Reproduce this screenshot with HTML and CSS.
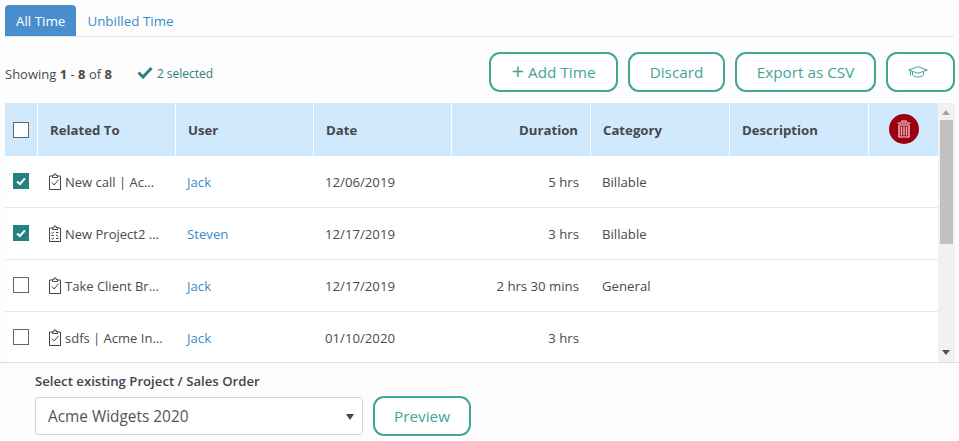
FILE: index.html
```html
<!DOCTYPE html>
<html lang="en">
<head>
  <meta charset="UTF-8" />
  <title>Time Entries</title>
  <link rel="stylesheet" href="styles.css">
</head>
<body>

<div class="tabs">
  <a class="tab active">All Time</a>
  <a class="tab">Unbilled Time</a>
</div>

<div class="toolbar">
  <div class="summary">
    <span>Showing <b>1</b> - <b>8</b> of <b>8</b></span>
    <span class="selected">
      <svg class="tick" viewBox="0 0 16 13"><path d="M1.5 6.5 L6 11 L14.5 2" /></svg>
      2 selected
    </span>
  </div>
  <div class="actions">
    <button class="btn btn-add"><span class="plus">+</span> Add Time</button>
    <button class="btn btn-discard">Discard</button>
    <button class="btn btn-export">Export as CSV</button>
    <button class="btn btn-help">
      <svg viewBox="0 0 20 12" width="20" height="12"><path d="M10 .7 L19.3 4 L10 7.3 L.7 4 Z M4.5 5.8 V9 C7 11.6 13 11.6 15.5 9 V5.8 M2.5 4.8 V9.5" /></svg>
    </button>
  </div>
</div>

<div class="grid-wrap">
  <div class="grid-scroll">
    <table class="grid">
      <thead>
        <tr>
          <th class="col-check"><span class="check"></span></th>
          <th>Related To</th>
          <th>User</th>
          <th>Date</th>
          <th class="num">Duration</th>
          <th>Category</th>
          <th>Description</th>
          <th class="col-del">
            <span class="del">
              <svg viewBox="0 0 14 18" width="14" height="18"><path d="M5 2 V1 H9 V2 M0.5 3 H13.5 M2 5 H12 V17 H2 Z" /><path class="bars" d="M4.5 6.5 V15.5 M7 6.5 V15.5 M9.5 6.5 V15.5" /></svg>
            </span>
          </th>
        </tr>
      </thead>
      <tbody id="rows"></tbody>
    </table>
  </div>
  <div class="scrollbar">
    <span class="arrow up"></span>
    <span class="thumb"></span>
    <span class="arrow down"></span>
  </div>
</div>

<div class="footer">
  <label class="field-label">Select existing Project / Sales Order</label>
  <div class="footer-row">
    <div class="select">Acme Widgets 2020<span class="caret"></span></div>
    <button class="btn btn-preview">Preview</button>
  </div>
</div>

<script>
  const entries = [
    { checked: true, kind: "task", name: "New call | Ac...", user: "Jack", date: "12/06/2019", duration: "5 hrs", category: "Billable" },
    { checked: true, kind: "list", name: "New Project2 ...", user: "Steven", date: "12/17/2019", duration: "3 hrs", category: "Billable" },
    { checked: false, kind: "task", name: "Take Client Br...", user: "Jack", date: "12/17/2019", duration: "2 hrs 30 mins", category: "General" },
    { checked: false, kind: "task", name: "sdfs | Acme In...", user: "Jack", date: "01/10/2020", duration: "3 hrs", category: "" }
  ];

  const board = '<path d="M4 3 H1.5 V16.5 H12.5 V3 H10 M4.5 4.5 V2.5 H6 V1 H8 V2.5 H9.5 V4.5 Z" />';
  const marks = {
    task: '<path d="M4 9.5 L6.2 12 L10.5 6.8" />',
    list: '<path d="M3.5 7.5 L4.5 8.5 L6 6.8 M8 7.5 H10.5 M3.5 10.5 H6 M8 9.8 L10.2 11.5 M3.5 13.5 L4.5 14 L6 13 M8 13.5 H10.5" />'
  };

  document.getElementById("rows").innerHTML = entries.map(e => `
    <tr>
      <td class="col-check"><span class="check ${e.checked ? "on" : ""}">${e.checked ? '<svg viewBox="0 0 16 16"><path d="M3.5 8.5 L6.8 11.5 L12.5 5" /></svg>' : ""}</span></td>
      <td><svg class="kind" viewBox="0 0 14 18" width="14" height="18">${board}${marks[e.kind]}</svg>${e.name}</td>
      <td><a class="user">${e.user}</a></td>
      <td>${e.date}</td>
      <td class="num">${e.duration}</td>
      <td>${e.category}</td>
      <td></td>
      <td></td>
    </tr>`).join("");
</script>
</body>
</html>
```

FILE: styles.css
```css
* {
  box-sizing: border-box;
}

body {
  margin: 0;
  height: 441px;
  overflow: hidden;
  background: #fdfdfd;
  font-family: 'Open Sans', sans-serif;
  font-size: 13px;
  color: #4a4a4a;
}

.tabs {
  display: flex;
  height: 32px;
  margin: 5px 5px 0;
  border-bottom: 1px solid #dfe3ea;
}

.tab {
  padding: 7px 11px 0;
  height: 31px;
  color: #3a8ccb;
  font-size: 13.4px;
  border-radius: 4px 4px 0 0;
}

.tab.active {
  background: #4a8fcd;
  color: #fff;
}

.toolbar {
  display: flex;
  justify-content: space-between;
  align-items: center;
  height: 66px;
  padding: 4px 4px 0 5px;
}

.summary {
  display: flex;
  align-items: center;
  gap: 25px;
  font-size: 13px;
  padding-top: 3px;
}

.selected {
  display: flex;
  align-items: center;
  gap: 4px;
  font-size: 12px;
  color: #2b8080;
}

.tick {
  width: 16px;
  height: 13px;
  margin-top: -3px;
  fill: none;
  stroke: #2b8080;
  stroke-width: 3;
}

.actions {
  display: flex;
  gap: 10px;
}

.btn {
  height: 40px;
  border: 2px solid #41a598;
  border-radius: 11px;
  background: #fff;
  color: #41a598;
  font-family: 'Open Sans', sans-serif;
  font-size: 15.3px;
  padding: 0;
}

.plus {
  font-size: 22px;
  line-height: 16px;
  vertical-align: -1px;
}

.btn-add { width: 129px; }
.btn-discard { width: 97px; }
.btn-export { width: 141px; }
.btn-help { width: 69px; padding: 0 5px 4px 0; }

.btn-help svg {
  fill: none;
  stroke: #41a598;
  stroke-width: 1;
  vertical-align: middle;
}

.grid-wrap {
  display: flex;
  height: 259px;
  margin-left: 5px;
}

.grid-scroll {
  width: 933px;
  overflow: hidden;
  background: #fff;
}

.grid {
  width: 933px;
  table-layout: fixed;
  border-collapse: separate;
  border-spacing: 0;
}

.grid th {
  height: 53px;
  padding: 0 12px;
  background: #d0e9fd;
  border-right: 1px solid #fff;
  text-align: left;
  font-size: 13.2px;
  font-weight: 700;
  color: #484848;
}

.grid th:last-child {
  border-right: 0;
}

.grid td {
  height: 52px;
  padding: 0 12px 0 11px;
  border-bottom: 1px solid #e6e6e6;
  font-size: 13.2px;
  white-space: nowrap;
  overflow: hidden;
}

.grid th:nth-child(2), .grid td:nth-child(2) { width: 138px; }
.grid th:nth-child(3), .grid td:nth-child(3) { width: 138px; }
.grid th:nth-child(4), .grid td:nth-child(4) { width: 138px; }
.grid th:nth-child(5), .grid td:nth-child(5) { width: 139px; }
.grid th:nth-child(6), .grid td:nth-child(6) { width: 139px; }
.grid th:nth-child(7), .grid td:nth-child(7) { width: 139px; }

.grid td:nth-child(2) {
  padding: 0 0 0 10px;
  font-size: 13px;
}

.grid .col-check {
  width: 33px;
  padding: 0 0 0 8px;
}

.grid td.col-check .check {
  margin-top: -2px;
}

.grid .col-del {
  padding: 0;
  text-align: center;
}

.grid .num {
  text-align: right;
}

.check {
  display: block;
  width: 16px;
  height: 16px;
  border: 1px solid #666;
  background: #fff;
}

.check.on {
  border-color: #268080;
  background: #268080;
}

.check svg {
  display: block;
  width: 14px;
  height: 14px;
  fill: none;
  stroke: #fff;
  stroke-width: 2.4;
}

.kind {
  margin-right: 3px;
  vertical-align: -4px;
  fill: none;
  stroke: #444;
  stroke-width: 1;
}

.user {
  color: #3a8ccb;
}

.del {
  display: inline-flex;
  align-items: center;
  justify-content: center;
  width: 30px;
  height: 30px;
  border-radius: 50%;
  background: #9a0010;
  vertical-align: middle;
  margin-top: -2px;
}

.del svg {
  fill: none;
  stroke: #fbe6e6;
  stroke-width: 1.2;
}

.del .bars {
  stroke-width: 1.5;
  stroke: #e8a8a8;
}

.scrollbar {
  position: relative;
  width: 17px;
  background: #f1f1f1;
}

.arrow {
  position: absolute;
  left: 4px;
  border-left: 4px solid transparent;
  border-right: 4px solid transparent;
}

.arrow.up {
  top: 7px;
  border-bottom: 5px solid #a3a3a3;
}

.arrow.down {
  bottom: 7px;
  border-top: 5px solid #505050;
}

.thumb {
  position: absolute;
  top: 17px;
  left: 2px;
  width: 13px;
  height: 124px;
  background: #c1c1c1;
}

.footer {
  height: 79px;
  padding: 10px 35px 0;
  border-top: 1px solid #dcdcdc;
}

.field-label {
  display: block;
  font-size: 13.2px;
  font-weight: 600;
  line-height: 17px;
  color: #3f4650;
  margin-bottom: 6px;
}

.footer-row {
  display: flex;
  align-items: center;
  gap: 10px;
}

.select {
  position: relative;
  width: 328px;
  height: 38px;
  padding: 8px 12px;
  background: #fff;
  border: 1px solid #cfd3da;
  border-radius: 3px;
  font-size: 15.4px;
  color: #555;
}

.caret {
  position: absolute;
  right: 8px;
  top: 16px;
  border-left: 4px solid transparent;
  border-right: 4px solid transparent;
  border-top: 6px solid #444;
}

.btn-preview {
  width: 98px;
}
```
